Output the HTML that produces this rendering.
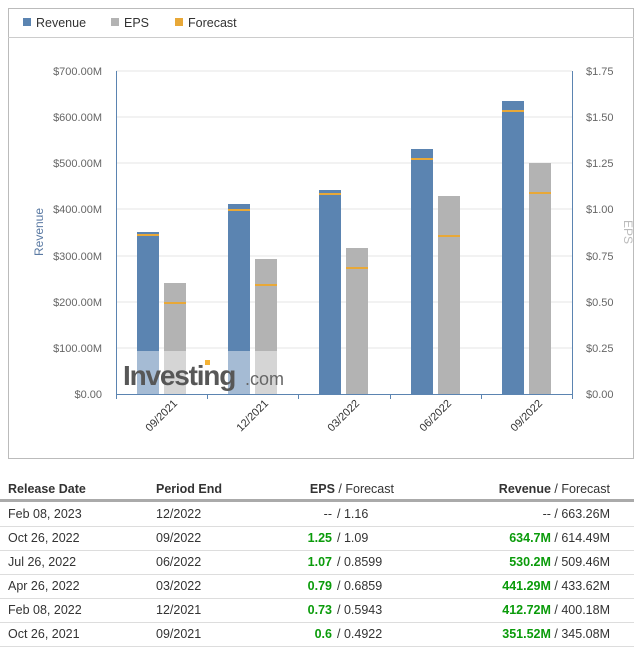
<!DOCTYPE html>
<html><head><style>
body{margin:0;background:#fff;font-family:"Liberation Sans",Arial,sans-serif;width:634px;height:652px;overflow:hidden;position:relative}
.row{position:absolute;left:0;width:634px;height:24px;border-bottom:1px solid #ddd;font-size:12.5px;color:#333}
.row span{position:absolute;top:5px;white-space:nowrap}
.h{font-weight:bold;border-bottom:3px solid #aaa;height:22px}
.h .n{font-weight:normal}
.g{color:#0a9b0a;font-weight:bold}
.a{left:8px}.b{left:156px}
.e{right:302px;text-align:right}.f{left:337px}
.rv{right:24px;text-align:right}
</style></head><body>
<svg width="634" height="470" style="position:absolute;left:0;top:0" font-family="Liberation Sans, Arial, sans-serif">
<rect x="8.5" y="8.5" width="625" height="450" fill="#fff" stroke="#bbb"/>
<line x1="8" y1="37.5" x2="634" y2="37.5" stroke="#ccc"/>
<rect x="23" y="18" width="8" height="8" fill="#5b84b1"/><text x="36" y="27" font-size="12.5" fill="#333">Revenue</text>
<rect x="111" y="18" width="8" height="8" fill="#b3b3b3"/><text x="124" y="27" font-size="12.5" fill="#333">EPS</text>
<rect x="175" y="18" width="8" height="8" fill="#e8a838"/><text x="188" y="27" font-size="12.5" fill="#333">Forecast</text>
<g stroke="#e6e6e6">
<line x1="116" y1="71" x2="572" y2="71"/><line x1="116" y1="117" x2="572" y2="117"/><line x1="116" y1="163" x2="572" y2="163"/><line x1="116" y1="209" x2="572" y2="209"/><line x1="116" y1="256" x2="572" y2="256"/><line x1="116" y1="302" x2="572" y2="302"/><line x1="116" y1="348" x2="572" y2="348"/>
</g>
<g font-size="11" fill="#666" text-anchor="end">
<text x="102" y="75">$700.00M</text><text x="102" y="121">$600.00M</text><text x="102" y="167">$500.00M</text><text x="102" y="213">$400.00M</text><text x="102" y="260">$300.00M</text><text x="102" y="306">$200.00M</text><text x="102" y="352">$100.00M</text><text x="102" y="398">$0.00</text>
</g>
<g font-size="11" fill="#666">
<text x="586" y="75">$1.75</text><text x="586" y="121">$1.50</text><text x="586" y="167">$1.25</text><text x="586" y="213">$1.00</text><text x="586" y="260">$0.75</text><text x="586" y="306">$0.50</text><text x="586" y="352">$0.25</text><text x="586" y="398">$0.00</text>
</g>
<text transform="translate(43,232) rotate(-90)" font-size="12" fill="#5b7aa3" text-anchor="middle">Revenue</text>
<text transform="translate(624,232) rotate(90)" font-size="12" fill="#bbb" text-anchor="middle">EPS</text>
<g fill="#5b84b1">
<rect x="137" y="232" width="22" height="162"/><rect x="228" y="204" width="22" height="190"/><rect x="319" y="190" width="22" height="204"/><rect x="411" y="149" width="22" height="245"/><rect x="502" y="101" width="22" height="293"/>
</g>
<g fill="#b3b3b3">
<rect x="164" y="283" width="22" height="111"/><rect x="255" y="259" width="22" height="135"/><rect x="346" y="248" width="22" height="146"/><rect x="438" y="196" width="22" height="198"/><rect x="529" y="163" width="22" height="231"/>
</g>
<g fill="#e8a838">
<rect x="137" y="234" width="22" height="2"/><rect x="228" y="209" width="22" height="2"/><rect x="319" y="193" width="22" height="2"/><rect x="411" y="158" width="22" height="2"/><rect x="502" y="110" width="22" height="2"/>
<rect x="164" y="302" width="22" height="2"/><rect x="255" y="284" width="22" height="2"/><rect x="346" y="267" width="22" height="2"/><rect x="438" y="235" width="22" height="2"/><rect x="529" y="192" width="22" height="2"/>
</g>
<rect x="117" y="351" width="168" height="43" fill="#fff" opacity="0.45"/>
<text x="123" y="385" font-size="28" font-weight="bold" fill="#575757" letter-spacing="-1.2">Investing</text>
<text x="245" y="385" font-size="18" fill="#666">.com</text>
<rect x="205" y="360" width="5" height="5" fill="#f5b335"/>
<line x1="116.5" y1="71" x2="116.5" y2="394" stroke="#5b84b1"/>
<line x1="572.5" y1="71" x2="572.5" y2="394" stroke="#5b84b1"/>
<line x1="116" y1="394.5" x2="572" y2="394.5" stroke="#5b84b1"/>
<g stroke="#5b84b1"><line x1="116.5" y1="394" x2="116.5" y2="399"/><line x1="207.5" y1="394" x2="207.5" y2="399"/><line x1="298.5" y1="394" x2="298.5" y2="399"/><line x1="390.5" y1="394" x2="390.5" y2="399"/><line x1="481.5" y1="394" x2="481.5" y2="399"/><line x1="572.5" y1="394" x2="572.5" y2="399"/></g>
<g font-size="11" fill="#333" text-anchor="end">
<text transform="translate(178,404) rotate(-45)">09/2021</text>
<text transform="translate(269,404) rotate(-45)">12/2021</text>
<text transform="translate(360,404) rotate(-45)">03/2022</text>
<text transform="translate(452,404) rotate(-45)">06/2022</text>
<text transform="translate(543,404) rotate(-45)">09/2022</text>
</g>
</svg>
<div class="row h" style="top:477px"><span class="a">Release Date</span><span class="b">Period End</span><span style="right:240px">EPS <span class="n" style="position:static">/</span> <span class="n" style="position:static">Forecast</span></span><span class="rv">Revenue <span class="n" style="position:static">/</span> <span class="n" style="position:static">Forecast</span></span></div>
<div class="row" style="top:502px"><span class="a">Feb 08, 2023</span><span class="b">12/2022</span><span class="e">--</span><span class="f">/ 1.16</span><span class="rv">-- / 663.26M</span></div>
<div class="row" style="top:526px"><span class="a">Oct 26, 2022</span><span class="b">09/2022</span><span class="e g">1.25</span><span class="f">/ 1.09</span><span class="rv"><b class="g">634.7M</b> / 614.49M</span></div>
<div class="row" style="top:550px"><span class="a">Jul 26, 2022</span><span class="b">06/2022</span><span class="e g">1.07</span><span class="f">/ 0.8599</span><span class="rv"><b class="g">530.2M</b> / 509.46M</span></div>
<div class="row" style="top:574px"><span class="a">Apr 26, 2022</span><span class="b">03/2022</span><span class="e g">0.79</span><span class="f">/ 0.6859</span><span class="rv"><b class="g">441.29M</b> / 433.62M</span></div>
<div class="row" style="top:598px"><span class="a">Feb 08, 2022</span><span class="b">12/2021</span><span class="e g">0.73</span><span class="f">/ 0.5943</span><span class="rv"><b class="g">412.72M</b> / 400.18M</span></div>
<div class="row" style="top:622px"><span class="a">Oct 26, 2021</span><span class="b">09/2021</span><span class="e g">0.6</span><span class="f">/ 0.4922</span><span class="rv"><b class="g">351.52M</b> / 345.08M</span></div>
</body></html>
